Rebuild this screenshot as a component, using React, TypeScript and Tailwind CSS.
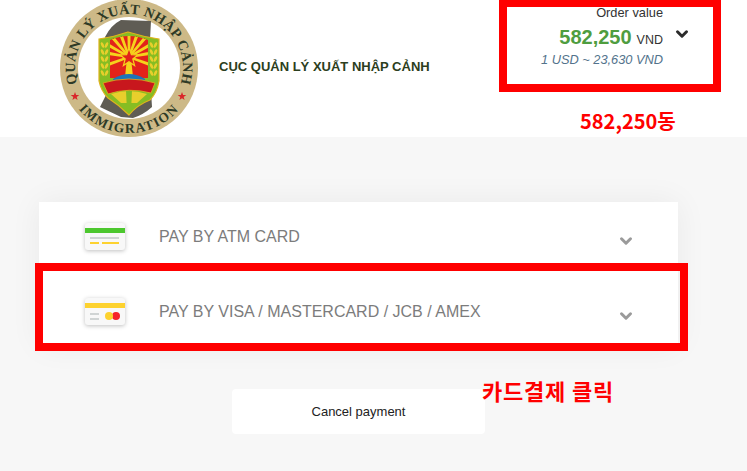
import { ChevronDown } from 'lucide-react';

const rayAngles = [-80, -60, -40, -20, 0, 20, 40, 60, 80, 110, 250];
const wheatRows = [46, 53, 60, 67, 74];
const starPoints = '0,-4.5 1.1,-1.4 4.3,-1.4 1.7,0.5 2.6,3.6 0,1.8 -2.6,3.6 -1.7,0.5 -4.3,-1.4 -1.1,-1.4';

function Logo() {
  return (
    <svg width="140" height="140" viewBox="0 0 140 140" className="shrink-0">
      <defs>
        <path id="topArc" d="M 70 123 A 54 54 0 1 1 70 15 A 54 54 0 1 1 70 123" />
        <path id="bottomArc" d="M 5 69 A 65 65 0 0 0 135 69" />
        <clipPath id="panel">
          <path d="M 51 41 Q 70 33 89 41 L 89 79 L 51 79 Z" />
        </clipPath>
      </defs>
      <circle cx="70" cy="69" r="69" fill="#cdb987" />
      <circle cx="70" cy="69" r="51" fill="#fff" />
      {/* grey band behind the badge */}
      <path d="M 46 38 Q 52 26 62 21 L 92 22 L 90 60 L 93 108 Q 84 116 74 119 L 62 118 L 41 108 L 60 70 Z" fill="#5f5c54" />
      {/* badge */}
      <path d="M 40 40 Q 55 38 69 33 Q 85 38 100 40 L 100 82 Q 98 94 91 101 Q 78 106 70 116 Q 60 106 49 99 Q 42 92 40 82 Z" fill="#86bd23" stroke="#e0b21c" strokeWidth="1.2" />
      <g clipPath="url(#panel)">
        <rect x="50" y="32" width="40" height="48" fill="#e2231a" />
        {rayAngles.map((a) => (
          <path key={a} d="M 70 58 L 69 10 L 71 10 Z" transform={`rotate(${a} 70 58)`} stroke="#f6d21c" strokeWidth="2.2" />
        ))}
      </g>
      <path d="M 70 40 L 74 78 L 66 78 Z" fill="#f6d21c" />
      <path d="M 70 49 L 72.4 55.6 L 79 55.8 L 73.8 60 L 75.6 66.6 L 70 62.8 L 64.4 66.6 L 66.2 60 L 61 55.8 L 67.6 55.6 Z" fill="#e2231a" stroke="#f6d21c" strokeWidth="1.2" />
      {wheatRows.map((y) => (
        <g key={y} fill="#e8cf2c">
          <ellipse cx="43.5" cy={y} rx="1.4" ry="3" transform={`rotate(-25 43.5 ${y})`} />
          <ellipse cx="47.5" cy={y} rx="1.4" ry="3" transform={`rotate(25 47.5 ${y})`} />
          <ellipse cx="92.5" cy={y} rx="1.4" ry="3" transform={`rotate(-25 92.5 ${y})`} />
          <ellipse cx="96.5" cy={y} rx="1.4" ry="3" transform={`rotate(25 96.5 ${y})`} />
        </g>
      ))}
      <path d="M 54 80 Q 70 70 86 80 L 86 83 L 54 83 Z" fill="#1d75b8" />
      <path d="M 44 84 Q 70 76 96 84 L 92 94 Q 70 88 49 95 Z" fill="#c8171d" stroke="#e0b21c" strokeWidth="0.8" />
      <path d="M 52 95 Q 70 89 88 95 L 78 104 L 62 104 Z" fill="#e8cf2c" />
      <path d="M 67 92 L 73 92 L 72 112 L 68 112 Z" fill="#86bd23" />
      <text fontFamily='"Liberation Serif", serif' fontWeight="700" fontSize="14.2" fill="#2e3a26" letterSpacing="0.2">
        <textPath href="#topArc" startOffset="50%" textAnchor="middle">QUẢN LÝ XUẤT NHẬP CẢNH</textPath>
      </text>
      <text fontFamily='"Liberation Serif", serif' fontWeight="700" fontSize="13.5" fill="#2e3a26" letterSpacing="1.4">
        <textPath href="#bottomArc" startOffset="50%" textAnchor="middle">IMMIGRATION</textPath>
      </text>
      <polygon points={starPoints} transform="translate(16 97.5)" fill="#d9262a" />
      <polygon points={starPoints} transform="translate(123 97.5)" fill="#d9262a" />
    </svg>
  );
}

function CardIcon({ stripe, visa }: { stripe: string; visa?: boolean }) {
  return (
    <div className="flex h-[27px] w-10 flex-col rounded-[3px] bg-[#f8f8f8] pt-[5px] shadow-[0_1px_4px_rgba(0,0,0,0.25)]">
      <div className="h-[5px] w-full" style={{ backgroundColor: stripe }} />
      {visa ? (
        <div className="mt-[4px] flex items-center px-[5px]">
          <div className="flex flex-col gap-[3px]">
            <div className="h-[2px] w-[9px] bg-[#d0d4d4]" />
            <div className="h-[2px] w-[9px] bg-[#d0d4d4]" />
          </div>
          <div className="ml-[6px] flex">
            <div className="z-10 h-2 w-2 rounded-full bg-[#fdd22f]" />
            <div className="-ml-[1px] h-2 w-2 rounded-full bg-[#f5242a]" />
          </div>
        </div>
      ) : (
        <div className="mt-[4px] flex flex-col gap-[3px] px-[5px]">
          <div className="h-[2px] w-[29px] bg-[#d0d4d4]" />
          <div className="flex gap-[3px]">
            <div className="h-[2px] w-[9px] bg-[#fdd22f]" />
            <div className="h-[2px] w-[17px] bg-[#fdd22f]" />
          </div>
        </div>
      )}
    </div>
  );
}

function PayRow({ label, stripe, visa }: { label: string; stripe: string; visa?: boolean }) {
  return (
    <div className="flex h-[69px] items-center pl-[46px] pr-[43px]">
      <CardIcon stripe={stripe} visa={visa} />
      <span className="ml-[34px] flex-1 text-[16px] text-[#7c7c7c]">{label}</span>
      <ChevronDown className="mt-[9px] text-[#9a9a9a]" size={18} strokeWidth={4} />
    </div>
  );
}

export default function App() {
  return (
    <div className="relative h-[471px] w-[747px] overflow-hidden bg-[#f7f7f7] font-['Liberation_Sans',sans-serif]">
      <header className="flex h-[137px] items-center bg-white pl-[59px]">
        <Logo />
        <span className="ml-[20px] mt-[-3px] text-[13px] font-bold text-[#2c3e20]">CỤC QUẢN LÝ XUẤT NHẬP CẢNH</span>
      </header>

      <main className="flex flex-col items-start pl-[39px] pt-[65px]">
        <div className="flex w-[639px] flex-col gap-[6px] bg-white shadow-[0_0_30px_rgba(0,0,0,0.06)]">
          <PayRow label="PAY BY ATM CARD" stripe="#4cc72e" />
          <PayRow label="PAY BY VISA / MASTERCARD / JCB / AMEX" stripe="#fdd22f" visa />
        </div>
        <button className="ml-[193px] mt-[43px] h-[45px] w-[253px] rounded-[4px] bg-white text-[13px] text-[#222]">Cancel payment</button>
      </main>

      {/* order summary box */}
      <div className="absolute left-[499px] top-[-1px] h-[93px] w-[222px] border-[8px] border-[#ff0000]" />
      <div className="absolute left-[507px] top-[6px] flex w-[156px] flex-col items-end">
        <span className="text-[12.8px] leading-[14px] text-[#333]">Order value</span>
        <div className="mt-[3px] flex items-baseline gap-[5px]">
          <span className="text-[20px] font-bold leading-[28px] text-[#4f9d3f]">582,250</span>
          <span className="text-[12.5px] text-[#333]">VND</span>
        </div>
        <span className="mt-[2px] text-[12.8px] italic leading-[14px] text-[#53738c]">1 USD ~ 23,630 VND</span>
      </div>
      <ChevronDown className="absolute left-[673px] top-[25px] text-[#2b2b2b]" size={18} strokeWidth={4} />

      {/* red annotations */}
      <div className="absolute left-[35px] top-[263px] h-[88px] w-[653px] border-[8px] border-[#ff0000]" />
      <span className="absolute left-[580px] top-[106px] font-['Noto_Sans_CJK_KR',sans-serif] text-[20px] font-bold leading-[30px] text-[#ff0000]">582,250동</span>
      <span className="absolute left-[482px] top-[375px] font-['Noto_Sans_CJK_KR',sans-serif] text-[22px] font-bold leading-[30px] tracking-[0.8px] text-[#ff0000]">카드결제 클릭</span>
    </div>
  );
}
